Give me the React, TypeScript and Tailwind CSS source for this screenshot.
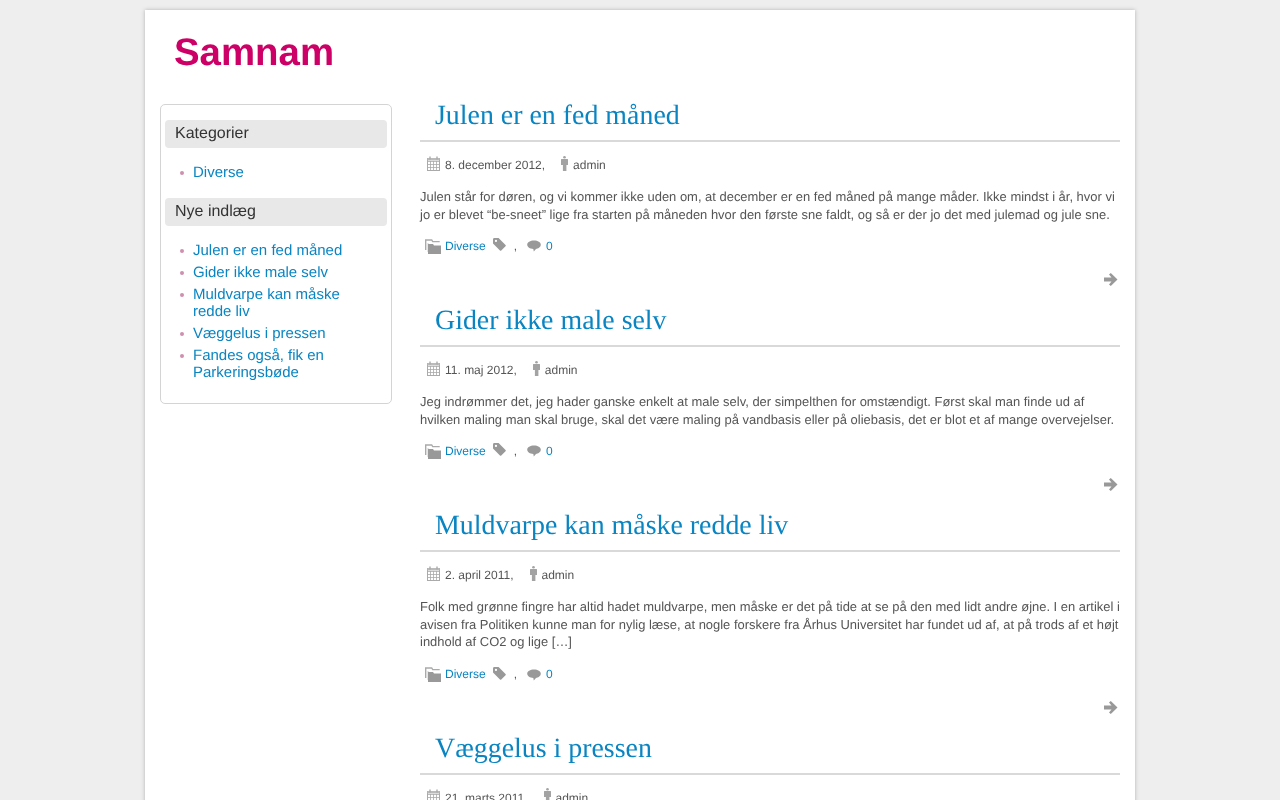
const sans = "font-['Liberation_Sans',Arial,sans-serif]";

function CalendarIcon() {
  return (
    <svg width="14" height="15" viewBox="0 0 14 15" className="block mb-[4px]" fill="none" stroke="#aaa">
      <rect x="0.5" y="2.5" width="12" height="12" />
      <rect x="0.5" y="2" width="12" height="2.5" fill="#bbb" stroke="none" />
      <path d="M0 5.5h13M0 8.5h13M0 11.5h13M3.5 5v10M6.5 5v10M9.5 5v10" strokeWidth="0.8" />
      <path d="M3 0.5v3M10 0.5v3" strokeWidth="1.4" />
    </svg>
  );
}

function PersonIcon() {
  return (
    <svg width="7" height="15" viewBox="0 0 7 15" className="block mb-[5px]" fill="#a3a3a3">
      <circle cx="3.5" cy="1.3" r="1.3" />
      <path d="M0.5 3h6a.5.5 0 0 1 .5.5V9H5.4v6H1.9V9H0V3.5a.5.5 0 0 1 .5-.5z" />
    </svg>
  );
}

function FolderIcon() {
  return (
    <svg width="17" height="15" viewBox="0 0 17 15" className="block" fill="none">
      <path d="M0.7 11V1h6l1 1.6h7" stroke="#aaa" strokeWidth="1.4" />
      <path d="M3 13V4" stroke="#ccc" />
      <path d="M3 5h5l1 1.5h7V15H3z" fill="#999" />
    </svg>
  );
}

function TagIcon() {
  return (
    <svg width="13" height="13" viewBox="0 0 14 14" className="block">
      <path fillRule="evenodd" fill="#999" d="M1.5 0H6l7.5 7.5a1 1 0 0 1 0 1.4l-4.6 4.6a1 1 0 0 1-1.4 0L0 6V1.5A1.5 1.5 0 0 1 1.5 0zM3.2 2a1.2 1.2 0 1 0 0 2.4 1.2 1.2 0 0 0 0-2.4z" />
    </svg>
  );
}

function BubbleIcon() {
  return (
    <svg width="14" height="12" viewBox="0 0 14 12" className="block" fill="#999">
      <path d="M7 0.5c3.8 0 6.8 1.8 6.8 4.2S10.8 8.8 9 8.9L6.8 11.5 6.3 8.9C3 8.8 0.2 7 0.2 4.7S3.2 0.5 7 0.5z" />
    </svg>
  );
}

function ArrowIcon() {
  return (
    <svg width="14" height="13" viewBox="0 0 14 13" className="block" fill="#999">
      <path d="M0 4.5h7.5L5 1.5 6.8 0 13.5 6.5 6.8 13 5 11.5 7.5 8.5H0z" />
    </svg>
  );
}

const links = "text-[#0a85c2]";

type PostProps = { title: string; date: string; lines: string[] };

function Post({ title, date, lines }: PostProps) {
  const long = lines.length > 2;
  return (
    <article>
      <h2 className="font-['Liberation_Serif','Times_New_Roman',serif] text-[27.9px] leading-[32px] font-normal text-[#0a85c2] pl-[15px] pt-[1px] pb-[8px] border-b-2 border-[#d9d9d9]">
        {title}
      </h2>
      <div className="flex items-center h-[15px] mt-[16px] pl-[7px] text-[12px] leading-[15px] text-[#555]">
        <CalendarIcon />
        <span className="ml-[4px]">{date},</span>
        <span className="ml-[16px]"><PersonIcon /></span>
        <span className="ml-[5px]">admin</span>
      </div>
      <div className="mt-[15px] text-[12.96px] leading-[17.55px] text-[#555]">
        {lines.map((line) => (
          <p key={line} className="whitespace-nowrap">{line}</p>
        ))}
      </div>
      <div className={`flex items-center h-[16px] pl-[5px] text-[12px] leading-[15px] ${long ? "mt-[16px]" : "mt-[15px]"}`}>
        <FolderIcon />
        <span className={`ml-[3px] ${links}`}>Diverse</span>
        <span className="ml-[7px] -mt-[3px]"><TagIcon /></span>
        <span className="ml-[8px] text-[#555]">,</span>
        <span className="ml-[10px]"><BubbleIcon /></span>
        <span className={`ml-[5px] ${links}`}>0</span>
      </div>
      <div className={`flex justify-end h-[13px] pr-[2px] mb-[18px] ${long ? "mt-[18px]" : "mt-[19px]"}`}>
        <ArrowIcon />
      </div>
    </article>
  );
}

function SideItem({ children }: { children: React.ReactNode }) {
  return (
    <li className="flex text-[15px] leading-[17px] mb-[5px] text-[#0a85c2]">
      <span className="w-[4px] h-[4px] rounded-full bg-[#cf8fae] mt-[7px] ml-[15px] mr-[9px] shrink-0" />
      <span>{children}</span>
    </li>
  );
}

function SideTitle({ children }: { children: React.ReactNode }) {
  return (
    <h3 className="h-[28px] bg-[#e8e8e8] rounded-[4px] pl-[10px] text-[16px] leading-[27px] font-normal text-[#333]">
      {children}
    </h3>
  );
}

export default function App() {
  return (
    <div className={`h-[800px] overflow-hidden bg-[#eeeeee] pt-[10px] antialiased [text-rendering:geometricPrecision] ${sans}`}>
      <div className="w-[990px] min-h-[900px] mx-auto bg-white shadow-[0_0_4px_rgba(0,0,0,0.25)] [will-change:opacity]">
        <h1 className="h-[94px] pl-[29px] pt-[21px] text-[38.4px] leading-[44px] font-bold text-[#cc0066]">Samnam</h1>
        <div className="flex items-start pl-[15px]">
          <aside className="w-[232px] h-[300px] border border-[#d4d4d4] rounded-[5px] px-[4px] pt-[15px] shrink-0">
            <SideTitle>Kategorier</SideTitle>
            <ul className="mt-[16px] mb-[17px]">
              <SideItem>Diverse</SideItem>
            </ul>
            <SideTitle>Nye indlæg</SideTitle>
            <ul className="mt-[16px]">
              <SideItem>Julen er en fed måned</SideItem>
              <SideItem>Gider ikke male selv</SideItem>
              <SideItem>Muldvarpe kan måske<br />redde liv</SideItem>
              <SideItem>Væggelus i pressen</SideItem>
              <SideItem>Fandes også, fik en<br />Parkeringsbøde</SideItem>
            </ul>
          </aside>
          <main className="w-[700px] ml-[28px] -mt-[5px]">
            <Post
              title="Julen er en fed måned"
              date="8. december 2012"
              lines={[
                "Julen står for døren, og vi kommer ikke uden om, at december er en fed måned på mange måder. Ikke mindst i år, hvor vi",
                "jo er blevet “be-sneet” lige fra starten på måneden hvor den første sne faldt, og så er der jo det med julemad og jule sne.",
              ]}
            />
            <Post
              title="Gider ikke male selv"
              date="11. maj 2012"
              lines={[
                "Jeg indrømmer det, jeg hader ganske enkelt at male selv, der simpelthen for omstændigt. Først skal man finde ud af",
                "hvilken maling man skal bruge, skal det være maling på vandbasis eller på oliebasis, det er blot et af mange overvejelser.",
              ]}
            />
            <Post
              title="Muldvarpe kan måske redde liv"
              date="2. april 2011"
              lines={[
                "Folk med grønne fingre har altid hadet muldvarpe, men måske er det på tide at se på den med lidt andre øjne. I en artikel i",
                "avisen fra Politiken kunne man for nylig læse, at nogle forskere fra Århus Universitet har fundet ud af, at på trods af et højt",
                "indhold af CO2 og lige […]",
              ]}
            />
            <Post title="Væggelus i pressen" date="21. marts 2011" lines={[]} />
          </main>
        </div>
      </div>
    </div>
  );
}
